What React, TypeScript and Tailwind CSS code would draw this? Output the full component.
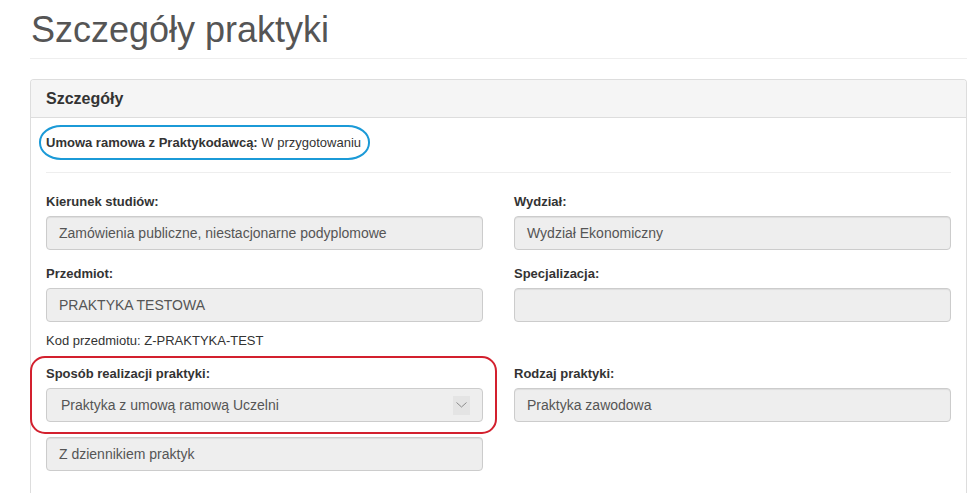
import React from "react";

const font = { fontFamily: '"Liberation Sans", Arial, sans-serif' };

const Field = ({ label, value }: { label?: string; value: string }) => (
  <div className="mb-[15px]">
    {label && <label className="block mb-[5px] text-[13px] leading-[18px] font-bold text-[#333]">{label}</label>}
    <div className="h-[34px] px-3 py-[6px] bg-[#eee] border border-[#ccc] rounded-[4px] text-[14px] leading-[20px] text-[#555] shadow-[inset_0_1px_1px_rgba(0,0,0,0.075)]">
      {value}
    </div>
  </div>
);

export default function App() {
  return (
    <div className="min-h-screen bg-white pl-[30px] pr-[12px] text-[#333]" style={font}>
      {/* Page header */}
      <div className="pt-[10px] pb-[8px] border-b border-[#eee] mb-[20px]">
        <h1 className="text-[36px] leading-[1.1] font-normal text-[#555] pl-px">Szczegóły praktyki</h1>
      </div>

      {/* Panel */}
      <div className="border border-[#ddd] rounded-[4px] border-b-0 rounded-b-none">
        <div className="bg-[#f5f5f5] border-b border-[#ddd] px-[15px] py-[10px] rounded-t-[3px]">
          <h3 className="text-[16px] leading-[1.1] font-bold text-[#333]">Szczegóły</h3>
        </div>

        <div className="p-[15px] pb-[40px]">
          <div className="text-[13px] leading-[19px]">
            <span className="relative inline-block">
              <span className="font-bold text-[#333]">Umowa ramowa z Praktykodawcą:</span>{" "}
              <span className="text-[#333]">W przygotowaniu</span>
              <span className="absolute left-[-7px] right-[-9px] top-[-8px] bottom-[-8px] border-[2.5px] border-[#1b9ad7] rounded-[22px/17px] pointer-events-none" />
            </span>
          </div>

          <hr className="my-[20px] border-0 border-t border-[#eee]" />

          <div className="grid grid-cols-2 gap-x-[31px] items-start">
            {/* Row 1 */}
            <Field label="Kierunek studiów:" value="Zamówienia publiczne, niestacjonarne podyplomowe" />
            <Field label="Wydział:" value="Wydział Ekonomiczny" />

            {/* Row 2 */}
            <div className="mb-[15px]">
              <label className="block mb-[5px] text-[13px] leading-[18px] font-bold text-[#333]">Przedmiot:</label>
              <div className="h-[34px] px-3 py-[6px] bg-[#eee] border border-[#ccc] rounded-[4px] text-[14px] leading-[20px] text-[#555]">
                PRAKTYKA TESTOWA
              </div>
              <div className="mt-[10px] text-[13px] leading-[18px] text-[#333]">Kod przedmiotu: Z-PRAKTYKA-TEST</div>
            </div>
            <Field label="Specjalizacja:" value="" />

            {/* Row 3 */}
            <div>
              <div className="relative mb-[15px]">
                <label className="block mb-[5px] text-[13px] leading-[18px] font-bold text-[#333]">Sposób realizacji praktyki:</label>
                <div className="h-[34px] pl-[14px] pr-[12px] bg-[#eee] border border-[#ccc] rounded-[4px] text-[14px] text-[#555] flex items-center justify-between">
                  <span>Praktyka z umową ramową Uczelni</span>
                  <span className="w-[17px] h-[19px] bg-[#e4e4e4] flex items-center justify-center">
                    <svg width="11" height="6" viewBox="0 0 11 6" fill="none">
                      <path d="M0.5 0.5 L5.5 5 L10.5 0.5" stroke="#8a8a8a" strokeWidth="1" />
                    </svg>
                  </span>
                </div>
                <span className="absolute left-[-16px] right-[-14px] top-[-9px] bottom-[-12px] border-2 border-[#d3202e] rounded-[15px] pointer-events-none" />
              </div>
              <Field value="Z dziennikiem praktyk" />
            </div>
            <Field label="Rodzaj praktyki:" value="Praktyka zawodowa" />
          </div>
        </div>
      </div>
    </div>
  );
}
